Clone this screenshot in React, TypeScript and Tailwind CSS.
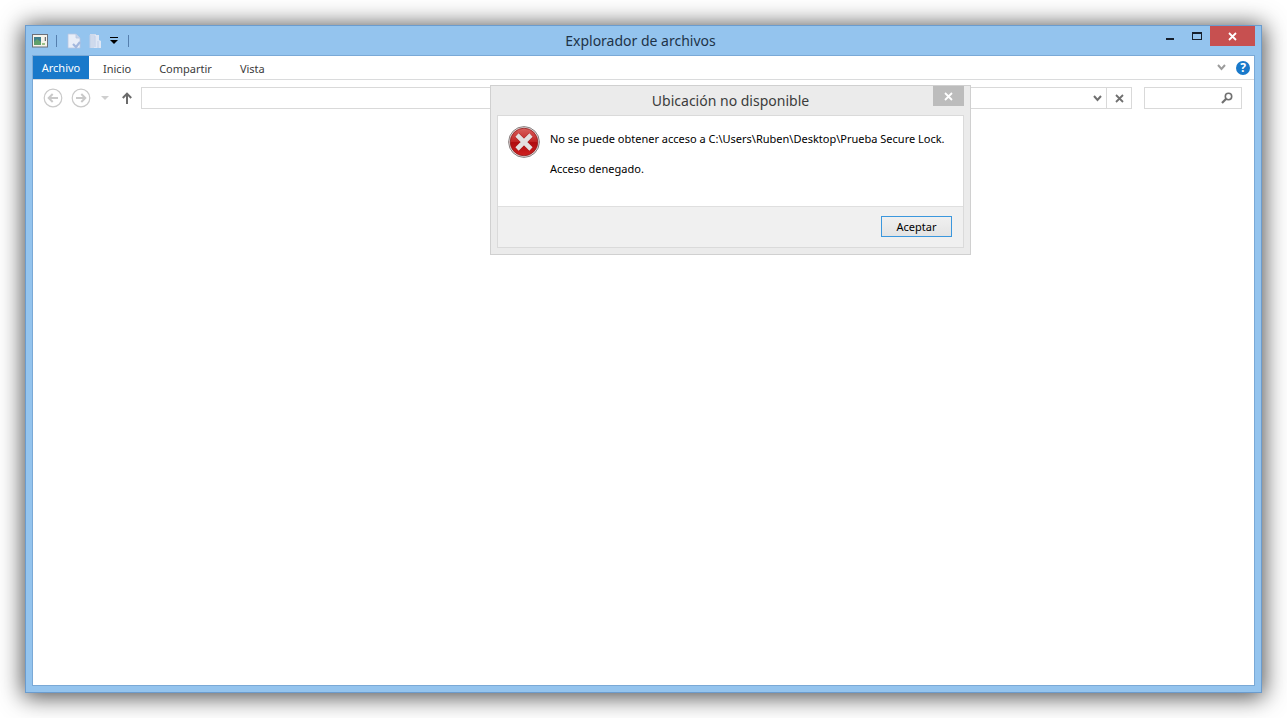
import type { ReactNode } from "react";

const tabs = ["Inicio", "Compartir", "Vista"];

function IconButton({ label, className, children }: { label: string; className: string; children: ReactNode }) {
    return (
        <button type="button" aria-label={label} className={`flex shrink-0 items-center justify-center ${className}`}>
            {children}
        </button>
    );
}

function CrossIcon({ className }: { className: string }) {
    return (
        <svg viewBox="0 0 9 9" className={className} fill="none" stroke="currentColor" strokeWidth="1.8">
            <path d="M1 1l7 7M8 1l-7 7" />
        </svg>
    );
}

function ChevronIcon({ className }: { className: string }) {
    return (
        <svg viewBox="0 0 9 7" className={className} fill="none" stroke="currentColor" strokeWidth="2">
            <path d="M1 1l3.5 4L8 1" />
        </svg>
    );
}

function ErrorIcon() {
    return (
        <svg viewBox="0 0 32 32" className="h-8 w-8 shrink-0">
            <defs>
                <linearGradient id="errorFill" x1="0" y1="0" x2="0" y2="1">
                    <stop offset="0" stopColor="#d9605c" />
                    <stop offset="0.48" stopColor="#c22525" />
                    <stop offset="0.52" stopColor="#b00d10" />
                    <stop offset="1" stopColor="#cf2020" />
                </linearGradient>
            </defs>
            <circle cx="16" cy="16" r="15.4" fill="#e8e4e4" stroke="#8a8080" strokeWidth="1" />
            <circle cx="16" cy="16" r="13.8" fill="url(#errorFill)" stroke="#8f1a1a" strokeWidth="0.8" />
            <path d="M9 9l14 14M23 9l-14 14" stroke="#8e1214" strokeWidth="5.8" opacity="0.5" />
            <path d="M9 9l14 14M23 9l-14 14" stroke="#e4e0e0" strokeWidth="4.6" />
        </svg>
    );
}

function TitleBar() {
    return (
        <header className="grid h-[29px] grid-cols-[1fr_auto_1fr] pr-1.5">
            <div className="flex items-center">
                <svg viewBox="0 0 16 14" className="h-3.5 w-4">
                    <rect x="0.5" y="0.5" width="15" height="12.5" fill="#f6f3ea" stroke="#6d7078" />
                    <rect x="2" y="3" width="7" height="8" fill="#3f7f8c" />
                    <path d="M2 11V8l3-3 4 3v3z" fill="#5fa06b" />
                    <path d="M10 10h3" stroke="#7fb069" strokeWidth="1.5" />
                    <path d="M13.3 3v4" stroke="#4b4f57" />
                </svg>
                <span className="ml-2 h-3 w-px bg-[#557fae]" />
                <IconButton label="Propiedades" className="ml-2.5">
                    <svg viewBox="0 0 14 16" className="h-4 w-3.5">
                        <path d="M1 1h8l4 4v10H1z" fill="#e9eef8" stroke="#b6c6e2" strokeWidth="0.8" />
                        <path d="M9 1v4h4" fill="#cad6ec" stroke="#b6c6e2" strokeWidth="0.8" />
                        <path d="M6 11l3 3 4-5" fill="none" stroke="#a3b8de" strokeWidth="2.2" />
                    </svg>
                </IconButton>
                <IconButton label="Nueva carpeta" className="ml-2">
                    <svg viewBox="0 0 13 16" className="h-4 w-[13px]">
                        <path d="M1 1h6v14H1z" fill="#cfdaec" />
                        <path d="M6 2h4v5l2 1v7H5z" fill="#dfe7f5" />
                        <path d="M1 2v13M6 3v11M9 8v7" stroke="#c0cfe8" />
                    </svg>
                </IconButton>
                <IconButton label="Personalizar barra" className="ml-2">
                    <svg viewBox="0 0 8 7" className="h-[7px] w-2" fill="#000">
                        <path d="M0 0h8v1H0zM0 3h8L4 7z" />
                    </svg>
                </IconButton>
                <span className="ml-2.5 h-3 w-px bg-[#557fae]" />
            </div>
            <h1 className="self-center text-sm leading-5 text-[#1d3348]">Explorador de archivos</h1>
            <div className="-mr-1.5 flex justify-end">
                <IconButton label="Minimizar" className="h-5 w-[27px]">
                    <svg viewBox="0 0 8 10" className="h-2.5 w-2">
                        <path d="M0 7h8v2H0z" fill="#16202c" />
                    </svg>
                </IconButton>
                <IconButton label="Maximizar" className="h-5 w-[27px]">
                    <svg viewBox="0 0 10 8" className="h-2 w-2.5">
                        <path d="M0 0h10v8H0zM1 2v5h8V2z" fill="#16202c" fillRule="evenodd" />
                    </svg>
                </IconButton>
                <IconButton label="Cerrar" className="h-5 w-[45px] bg-[#c75050] text-white">
                    <CrossIcon className="h-[9px] w-[9px]" />
                </IconButton>
            </div>
        </header>
    );
}

function Ribbon() {
    return (
        <nav className="flex h-6 border-b border-[#dadbdc] text-[11px] leading-4 text-[#3b3b3b]">
            <button type="button" className="h-full w-14 bg-[#1979ca] text-white">
                Archivo
            </button>
            {tabs.map((tab) => (
                <button type="button" key={tab} className="px-3.5 pt-0.5">
                    {tab}
                </button>
            ))}
            <div className="ml-auto flex items-center gap-2.5 pr-1">
                <IconButton label="Expandir la cinta" className="text-[#9c9c9c]">
                    <ChevronIcon className="h-[7px] w-[9px]" />
                </IconButton>
                <button
                    type="button"
                    aria-label="Ayuda"
                    className="h-3.5 w-3.5 rounded-full bg-[#1979ca] text-center text-xs leading-[14px] font-bold text-white"
                >
                    ?
                </button>
            </div>
        </nav>
    );
}

function RoundArrow({ flip }: { flip?: boolean }) {
    return (
        <svg viewBox="0 0 20 20" className={flip ? "h-5 w-5 -scale-x-100" : "h-5 w-5"} fill="none">
            <circle cx="10" cy="10" r="8.8" stroke="#c9c9c9" strokeWidth="1.2" />
            <path d="M15 10H6M9.7 6L5.7 10l4 4" stroke="#c9c9c9" strokeWidth="2" />
        </svg>
    );
}

function AddressBar() {
    return (
        <div className="flex items-center py-[7px] pr-3 pl-2.5">
            <IconButton label="Atrás" className="">
                <RoundArrow />
            </IconButton>
            <IconButton label="Adelante" className="ml-2">
                <RoundArrow flip />
            </IconButton>
            <IconButton label="Ubicaciones recientes" className="ml-2.5">
                <svg viewBox="0 0 8 4" className="h-1 w-2">
                    <path d="M0 0h8L4 4z" fill="#cfcfcf" />
                </svg>
            </IconButton>
            <IconButton label="Subir" className="ml-3">
                <svg viewBox="0 0 12 12" className="h-3 w-3" fill="none" stroke="#6b6b6b" strokeWidth="2">
                    <path d="M6 12V1.5M1.8 6L6 1.6 10.2 6" />
                </svg>
            </IconButton>
            <div className="ml-2 flex h-[22px] flex-1 border border-[#d9d9d9]">
                <input type="text" aria-label="Dirección" className="min-w-0 flex-1 px-2 text-xs outline-none" />
                <IconButton label="Ubicaciones anteriores" className="w-[18px] text-[#707070]">
                    <ChevronIcon className="h-[7px] w-[9px]" />
                </IconButton>
                <IconButton label="Detener" className="w-[25px] border-l border-[#d9d9d9] text-[#707070]">
                    <CrossIcon className="h-[9px] w-[9px]" />
                </IconButton>
            </div>
            <div className="ml-3 flex h-[22px] w-[98px] items-center border border-[#d9d9d9] pr-2">
                <input type="search" aria-label="Buscar" className="min-w-0 flex-1 px-2 text-xs outline-none" />
                <svg viewBox="0 0 12 12" className="h-3 w-3" fill="none" stroke="#707070">
                    <circle cx="7.5" cy="4.5" r="3.2" strokeWidth="1.6" />
                    <path d="M5.2 6.8L1 11" strokeWidth="2.2" />
                </svg>
            </div>
        </div>
    );
}

function ErrorDialog() {
    return (
        <div
            role="alertdialog"
            aria-labelledby="dialog-title"
            className="absolute top-[29px] left-[457px] w-[481px] border border-[#d0d0d0] bg-[#ebebeb] px-1.5 pb-1.5"
        >
            <div className="grid h-[29px] grid-cols-[1fr_auto_1fr]">
                <h2 id="dialog-title" className="col-start-2 self-center text-sm leading-5 text-[#3c3c3c]">
                    Ubicación no disponible
                </h2>
                <IconButton label="Cerrar mensaje" className="h-5 w-[31px] justify-self-end bg-[#bcbcbc] text-white">
                    <CrossIcon className="h-[9px] w-[9px]" />
                </IconButton>
            </div>
            <div className="border border-[#dadada] bg-white text-[11px] text-black">
                <div className="flex h-[90px] gap-2.5 px-2.5 pt-2.5">
                    <ErrorIcon />
                    <div className="pt-[5px] leading-[15px] whitespace-nowrap">
                        <p className="mb-[15px]">No se puede obtener acceso a C:\Users\Ruben\Desktop\Prueba Secure Lock.</p>
                        <p>Acceso denegado.</p>
                    </div>
                </div>
                <div className="flex h-[41px] items-start justify-end border-t border-[#dfdfdf] bg-[#f0f0f0] pt-[9px] pr-[11px]">
                    <button
                        type="button"
                        className="h-[21px] w-[71px] border border-[#3b97dd] bg-linear-to-b from-[#f0f0f0] to-[#e4e4e4] leading-4"
                    >
                        Aceptar
                    </button>
                </div>
            </div>
        </div>
    );
}

export default function App() {
    return (
        <div className="flex min-h-screen bg-white p-[25px] font-['Noto_Sans','Open_Sans',sans-serif]">
            <div className="flex flex-1 flex-col border border-[#6b9cce] bg-[#94c4ee] px-1.5 pb-1.5 shadow-[0_2px_22px_2px_rgba(0,0,0,0.7)]">
                <TitleBar />
                <main className="relative flex-1 border border-[#7aa9d6] bg-white">
                    <Ribbon />
                    <AddressBar />
                    <ErrorDialog />
                </main>
            </div>
        </div>
    );
}
